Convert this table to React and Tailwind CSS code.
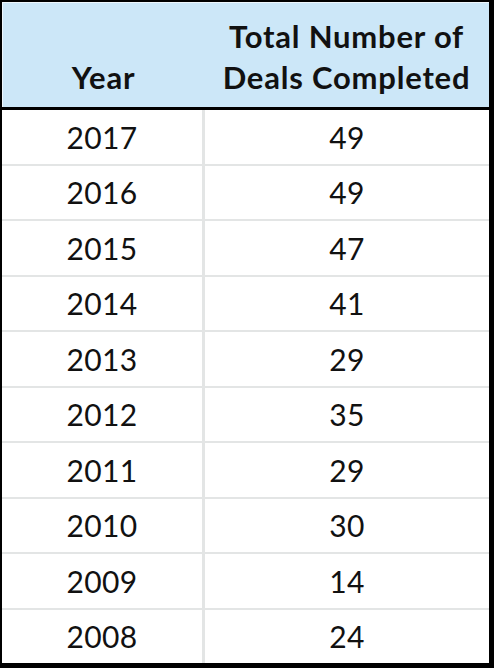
const rows = [
  ['2017', '49'],
  ['2016', '49'],
  ['2015', '47'],
  ['2014', '41'],
  ['2013', '29'],
  ['2012', '35'],
  ['2011', '29'],
  ['2010', '30'],
  ['2009', '14'],
  ['2008', '24'],
];

export default function App() {
  return (
    <div className="w-[494px] h-[668px] bg-black pl-[2px] pt-[2px] pr-[5px] pb-[5px] font-['Lato',_sans-serif] text-[#111]">
      <div className="flex h-full flex-col bg-white">
        {/* header */}
        <div className="grid h-[105px] grid-cols-[201px_1fr] border-l border-t border-[#eef7fd] bg-[#cce7f8] text-[31px] font-bold leading-[41px] tracking-[0.8px]">
          <div className="flex items-end justify-center pb-[9px]">Year</div>
          <div className="flex flex-col items-center justify-end pb-[9px]">
            <span>Total Number of</span>
            <span>Deals Completed</span>
          </div>
        </div>
        <div className="h-[3px] bg-black" />
        {/* body */}
        <div className="flex flex-1 flex-col gap-[2px] bg-[#e3e5e5]">
          {rows.map(([year, deals]) => (
            <div key={year} className="grid flex-1 grid-cols-[200px_1fr] gap-[3px] text-[30px] tracking-[0.3px]">
              <div className="flex items-center justify-center bg-white pt-[1px]">{year}</div>
              <div className="flex items-center justify-center bg-white pt-[1px]">{deals}</div>
            </div>
          ))}
        </div>
      </div>
    </div>
  );
}
